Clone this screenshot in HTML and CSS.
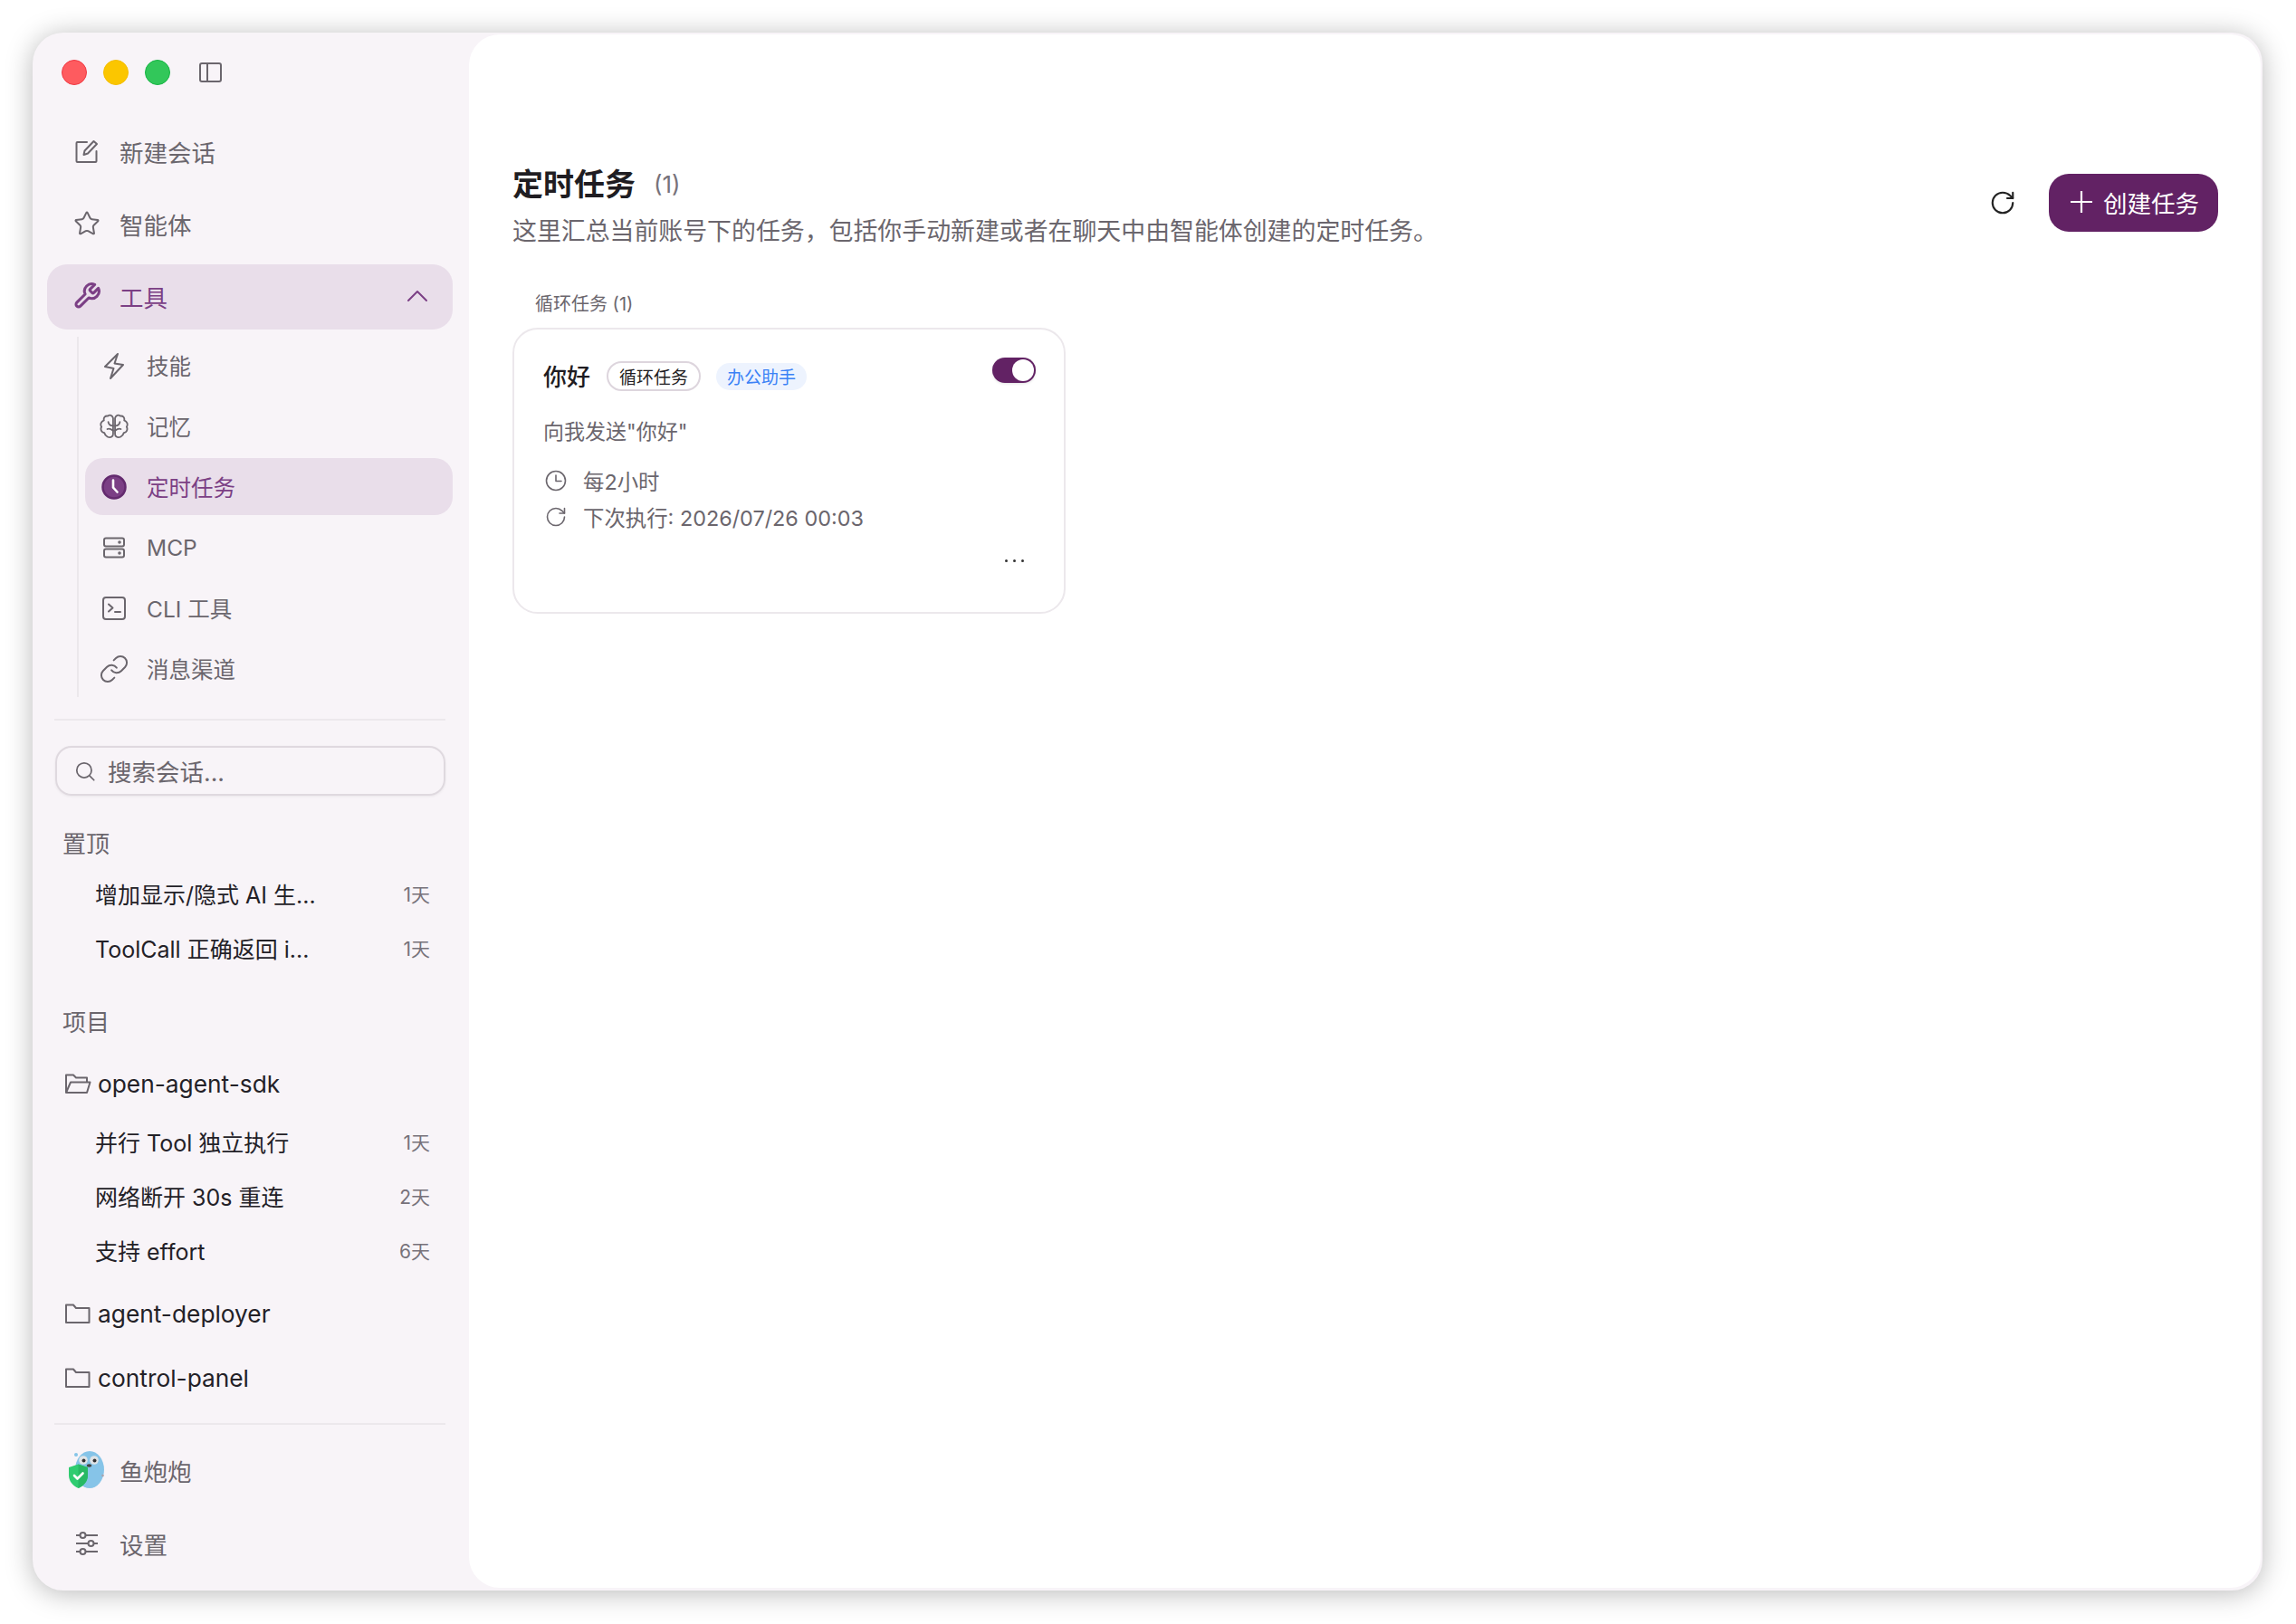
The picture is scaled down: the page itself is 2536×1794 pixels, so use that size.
FILE: index.html
```html
<!DOCTYPE html>
<html lang="zh-CN">

<head>
    <meta charset="UTF-8">
    <meta name="viewport" content="width=device-width, initial-scale=1.0">
    <title>定时任务</title>
    <link rel="stylesheet" href="styles.css">
</head>

<body>
    <div class="window">
        <aside class="sidebar">
            <div class="titlebar">
                <span class="light light-red"></span>
                <span class="light light-yellow"></span>
                <span class="light light-green"></span>
                <svg class="panel-icon" viewBox="0 0 25 22" fill="none" stroke="currentColor" stroke-width="2">
                    <rect x="1" y="1" width="23" height="20" rx="2" />
                    <path d="M9 1v20" />
                </svg>
            </div>

            <nav class="nav">
                <div class="nav-item">
                    <span class="nav-icon">
                        <svg width="26" height="26" viewBox="0 0 26 26" fill="none" stroke="currentColor" stroke-width="2" stroke-linejoin="round" stroke-linecap="round">
                            <path d="M13 3H2.5a1 1 0 0 0-1 1v20a1 1 0 0 0 1 1h20a1 1 0 0 0 1-1V13" />
                            <path d="M20.5 2l3.5 3-10 10.500-4.500 1.500 1-4.500z" />
                        </svg>
                    </span>
                    <span>新建会话</span>
                </div>
                <div class="nav-item">
                    <span class="nav-icon">
                        <svg width="30" height="30" viewBox="0 0 24 24" fill="none" stroke="currentColor" stroke-width="1.600" stroke-linejoin="round">
                            <path d="M11.525 2.295a.53.53 0 0 1 .95 0l2.31 4.679a2.123 2.123 0 0 0 1.595 1.16l5.166.756a.53.53 0 0 1 .294.904l-3.736 3.638a2.123 2.123 0 0 0-.611 1.878l.882 5.14a.53.53 0 0 1-.771.56l-4.618-2.428a2.122 2.122 0 0 0-1.973 0L6.396 21.01a.53.53 0 0 1-.77-.56l.881-5.139a2.122 2.122 0 0 0-.611-1.879L2.16 9.795a.53.53 0 0 1 .294-.906l5.165-.755a2.122 2.122 0 0 0 1.597-1.16z" />
                        </svg>
                    </span>
                    <span>智能体</span>
                </div>
                <div class="nav-item active">
                    <span class="nav-icon">
                        <svg width="32" height="32" viewBox="0 0 24 24" fill="none" stroke="currentColor" stroke-width="2.300" stroke-linejoin="round" stroke-linecap="round">
                            <path d="M14.7 6.300a1 1 0 0 0 0 1.400l1.600 1.600a1 1 0 0 0 1.400 0l3.770-3.770a6 6 0 0 1-7.940 7.940l-6.910 6.910a2.120 2.120 0 0 1-3-3l6.910-6.910a6 6 0 0 1 7.940-7.940l-3.760 3.760z" />
                        </svg>
                    </span>
                    <span>工具</span>
                    <svg class="chevron" width="24" height="14" viewBox="0 0 24 14" fill="none" stroke="currentColor" stroke-width="2" stroke-linecap="round" stroke-linejoin="round">
                        <path d="M2 12L12 2l10 10" />
                    </svg>
                </div>
            </nav>

            <div class="subnav">
                <div class="sub-item">
                    <span class="sub-icon">
                        <svg width="24" height="30" viewBox="0 0 24 30" fill="none" stroke="currentColor" stroke-width="2" stroke-linejoin="round">
                            <path d="M16 2L2 16l9.500 2L8 29l14-15-9.500-1.500z" />
                        </svg>
                    </span>
                    <span>技能</span>
                </div>
                <div class="sub-item">
                    <span class="sub-icon">
                        <svg width="32" height="28" viewBox="0 0 30 26" fill="none" stroke="currentColor" stroke-width="1.700" stroke-linecap="round" stroke-linejoin="round">
                            <g id="brain-half">
                                <path d="M14 4.500C13.500 1.800 10.500 .500 8.500 2.300 5.800 1.800 3.800 4 4.500 6.800 1.500 8 .300 11 2 13.500 .500 16 2 19.500 5 19.800 5.800 23.500 10 25.300 12.500 23.800 13.500 23.200 14 22 14 21V4.500z" />
                                <path d="M14 12.500C11.500 12.500 9.300 11 9 8.500" />
                                <path d="M8 15.800C9.500 15 11.500 15.500 14 17.500" />
                            </g>
                            <use href="#brain-half" transform="matrix(-1 0 0 1 30 0)" />
                        </svg>
                    </span>
                    <span>记忆</span>
                </div>
                <div class="sub-item active">
                    <span class="sub-icon">
                        <svg width="28" height="28" viewBox="0 0 28 28">
                            <circle cx="14" cy="14" r="12.500" fill="#7b3f85" stroke="#632a6e" stroke-width="2.500" />
                            <path d="M13 6.500v8l4.500 5" fill="none" stroke="#fff" stroke-width="2.600" stroke-linecap="round" />
                        </svg>
                    </span>
                    <span>定时任务</span>
                </div>
                <div class="sub-item">
                    <span class="sub-icon">
                        <svg width="26" height="24" viewBox="0 0 26 24" fill="none" stroke="currentColor" stroke-width="2">
                            <rect x="2" y="1.500" width="22" height="9" rx="2" />
                            <rect x="2" y="13.500" width="22" height="9" rx="2" />
                            <circle cx="19" cy="6" r=".8" />
                            <circle cx="19" cy="18" r=".8" />
                        </svg>
                    </span>
                    <span>MCP</span>
                </div>
                <div class="sub-item">
                    <span class="sub-icon">
                        <svg width="26" height="26" viewBox="0 0 26 26" fill="none" stroke="currentColor" stroke-width="2" stroke-linecap="round" stroke-linejoin="round">
                            <rect x="1" y="1" width="24" height="24" rx="3" />
                            <path d="M7 8.500l4.500 4-4.500 4" />
                            <path d="M14 17h6" />
                        </svg>
                    </span>
                    <span>CLI 工具</span>
                </div>
                <div class="sub-item">
                    <span class="sub-icon">
                        <svg width="34" height="34" viewBox="0 0 24 24" fill="none" stroke="currentColor" stroke-width="1.400" stroke-linecap="round" stroke-linejoin="round">
                            <path d="M10 13a5 5 0 0 0 7.540.54l3-3a5 5 0 0 0-7.070-7.070l-1.720 1.710" />
                            <path d="M14 11a5 5 0 0 0-7.540-.54l-3 3a5 5 0 0 0 7.070 7.070l1.710-1.710" />
                        </svg>
                    </span>
                    <span>消息渠道</span>
                </div>
            </div>

            <div class="divider divider-top"></div>

            <div class="search">
                <svg width="26" height="26" viewBox="0 0 24 24" fill="none" stroke="currentColor" stroke-width="1.600" stroke-linecap="round">
                    <circle cx="11" cy="11" r="7.500" />
                    <path d="M21 21l-4.300-4.300" />
                </svg>
                <span>搜索会话...</span>
            </div>

            <div class="group-title group-pinned">置顶</div>
            <div class="chat-row chat-first"><span>增加显示/隐式 AI 生...</span><span class="chat-age">1天</span></div>
            <div class="chat-row"><span>ToolCall 正确返回 i...</span><span class="chat-age">1天</span></div>

            <div class="group-title group-projects">项目</div>
            <div class="project project-open">
                <svg width="30" height="24" viewBox="0 0 30 24" fill="none" stroke="currentColor" stroke-width="2" stroke-linejoin="round">
                    <path d="M2 22V2.500h8l3 3h12v5" />
                    <path d="M2 22l5-11.500h21.500L25 22z" />
                </svg>
                <span>open-agent-sdk</span>
            </div>
            <div class="chat-row chat-first-project"><span>并行 Tool 独立执行</span><span class="chat-age">1天</span></div>
            <div class="chat-row"><span>网络断开 30s 重连</span><span class="chat-age">2天</span></div>
            <div class="chat-row"><span>支持 effort</span><span class="chat-age">6天</span></div>
            <div class="project project-second">
                <svg width="30" height="24" viewBox="0 0 30 24" fill="none" stroke="currentColor" stroke-width="2" stroke-linejoin="round">
                    <path d="M2 22V2.500h8l3 3.500h14.500v16z" />
                </svg>
                <span>agent-deployer</span>
            </div>
            <div class="project project-third">
                <svg width="30" height="24" viewBox="0 0 30 24" fill="none" stroke="currentColor" stroke-width="2" stroke-linejoin="round">
                    <path d="M2 22V2.500h8l3 3.500h14.500v16z" />
                </svg>
                <span>control-panel</span>
            </div>

            <div class="divider divider-bottom"></div>

            <div class="nav nav-bottom">
                <div class="nav-item">
                    <span class="nav-icon">
                        <svg width="40" height="42" viewBox="0 0 40 42">
                            <ellipse cx="23" cy="20.500" rx="16" ry="20.500" fill="#86c4e8" />
                            <circle cx="8" cy="4" r="2" fill="#86c4e8" />
                            <circle cx="37.500" cy="27" r="1.300" fill="#a9a3ad" />
                            <circle cx="16" cy="10" r="4.800" fill="#dfe3e6" />
                            <circle cx="28" cy="10" r="4.800" fill="#dfe3e6" />
                            <circle cx="16.500" cy="10.500" r="2" fill="#333" />
                            <circle cx="28.500" cy="10.500" r="2" fill="#333" />
                            <ellipse cx="22.500" cy="16" rx="2.800" ry="1.800" fill="#444" />
                            <path d="M0 18l10.500-3.500L21 18v9c0 6.500-5 11.500-10.500 14C5 38.500 0 33.500 0 27z" fill="#2fcc70" />
                            <path d="M10.500 14.500L21 18v9c0 6.500-5 11.500-10.500 14z" fill="#27b964" />
                            <path d="M6 27l3.500 3.500 6-6" fill="none" stroke="#fff" stroke-width="2.600" stroke-linecap="round" stroke-linejoin="round" />
                        </svg>
                    </span>
                    <span>鱼炮炮</span>
                </div>
                <div class="nav-item">
                    <span class="nav-icon">
                        <svg width="26" height="26" viewBox="0 0 26 26" fill="none" stroke="currentColor" stroke-width="2">
                            <path d="M1 4h4m7 0h13M1 13h13m7 0h4M1 22h4m7 0h13" />
                            <circle cx="8.500" cy="4" r="3" />
                            <circle cx="17.500" cy="13" r="3" />
                            <circle cx="8.500" cy="22" r="3" />
                        </svg>
                    </span>
                    <span>设置</span>
                </div>
            </div>
        </aside>

        <main class="main">
            <header class="header">
                <div>
                    <div class="page-title">
                        <h1>定时任务</h1>
                        <span class="page-count">(1)</span>
                    </div>
                    <p class="page-desc">这里汇总当前账号下的任务，包括你手动新建或者在聊天中由智能体创建的定时任务。</p>
                </div>
                <div class="actions">
                    <svg class="refresh" width="30" height="30" viewBox="0 0 24 24" fill="none" stroke="currentColor" stroke-width="1.700" stroke-linecap="round" stroke-linejoin="round">
                        <path d="M21 12a9 9 0 1 1-9-9c2.520 0 4.930 1 6.740 2.740L21 8" />
                        <path d="M21 3v5h-5" />
                    </svg>
                    <button class="btn-create">
                        <svg width="24" height="24" viewBox="0 0 24 24" fill="none" stroke="currentColor" stroke-width="2.200">
                            <path d="M12 0v24M0 12h24" />
                        </svg>
                        <span>创建任务</span>
                    </button>
                </div>
            </header>

            <div class="section-label">循环任务 (1)</div>

            <div class="card">
                <div class="card-top">
                    <span class="card-title">你好</span>
                    <span class="tag tag-outline">循环任务</span>
                    <span class="tag tag-blue">办公助手</span>
                    <span class="toggle"><span class="toggle-knob"></span></span>
                </div>
                <p class="card-desc">向我发送"你好"</p>
                <div class="meta meta-first">
                    <svg width="24" height="24" viewBox="0 0 24 24" fill="none" stroke="currentColor" stroke-width="1.600" stroke-linecap="round" stroke-linejoin="round">
                        <circle cx="12" cy="12" r="10.500" />
                        <path d="M12 6v6.500h6" />
                    </svg>
                    <span>每2小时</span>
                </div>
                <div class="meta">
                    <svg width="24" height="24" viewBox="0 0 24 24" fill="none" stroke="currentColor" stroke-width="1.600" stroke-linecap="round" stroke-linejoin="round">
                        <path d="M21.500 12a9.500 9.500 0 1 1-9.500-9.500c2.600 0 5 1 6.900 2.800L21.500 8" />
                        <path d="M21.500 2.500V8H16" />
                    </svg>
                    <span>下次执行: 2026/07/26 00:03</span>
                </div>
                <div class="card-more"><i></i><i></i><i></i></div>
            </div>
        </main>
    </div>
</body>

</html>
```

FILE: styles.css
```css
* {
    box-sizing: border-box;
}

body {
    margin: 0;
    height: 1794px;
    padding: 36px 0 0 36px;
    background: #fff;
    font-family: Inter, "Noto Sans CJK SC", sans-serif;
    color: #1f1d22;
    overflow: hidden;
}

.window {
    display: flex;
    width: 2463px;
    height: 1721px;
    background: #f8f4f8;
    border-radius: 34px;
    box-shadow: 0 3px 30px rgba(0, 0, 0, 0.28);
}

.sidebar {
    width: 482px;
    flex-shrink: 0;
    padding: 30px 18px 0 16px;
    color: #6b666d;
    font-size: 26px;
}

.titlebar {
    display: flex;
    align-items: center;
    height: 28px;
    padding-left: 16px;
    gap: 18px;
}

.light {
    width: 28px;
    height: 28px;
    border-radius: 50%;
    border: 1px solid transparent;
}

.light-red {
    background: #fe5b5f;
    border-color: #f03a44;
}

.light-yellow {
    background: #fbc600;
    border-color: #f5be00;
}

.light-green {
    background: #32c75a;
    border-color: #17b544;
}

.panel-icon {
    width: 25px;
    height: 22px;
    margin-left: 14px;
}

.nav {
    display: flex;
    flex-direction: column;
    gap: 8px;
    margin-top: 37px;
    font-size: 26.500px;
}

.nav-item {
    display: flex;
    align-items: center;
    height: 72px;
    padding-left: 24px;
    border-radius: 22px;
}

.nav-item.active {
    margin-top: 1px;
    padding-bottom: 2px;
    background: #e9deea;
    color: #7b3f85;
}

.nav-icon {
    display: flex;
    justify-content: center;
    align-items: center;
    width: 40px;
    margin-right: 16px;
}

.chevron {
    margin-left: auto;
    margin-right: 27px;
}

.subnav {
    display: flex;
    flex-direction: column;
    gap: 4px;
    margin: 8px 0 0 33px;
    padding-left: 7px;
    border-left: 2px solid #ece8ec;
    font-size: 24.500px;
}

.sub-item {
    display: flex;
    align-items: center;
    height: 63px;
    padding-left: 12px;
    border-radius: 20px;
}

.sub-item.active {
    background: #e9deea;
    color: #7b3f85;
}

.sub-icon {
    display: flex;
    justify-content: center;
    align-items: center;
    width: 40px;
    margin-right: 16px;
}

.divider {
    height: 2px;
    margin: 0 8px;
    background: #ece8ec;
}

.divider-top {
    margin-top: 24px;
}

.divider-bottom {
    margin-top: 20px;
}

.search {
    display: flex;
    align-items: center;
    gap: 12px;
    height: 55px;
    margin: 28px 8px 0 9px;
    padding-left: 18px;
    border: 2px solid #dfd9df;
    border-radius: 18px;
    box-shadow: 0 1px 3px rgba(0, 0, 0, 0.06);
    font-size: 26.500px;
}

.group-title {
    height: 40px;
    line-height: 40px;
    padding-left: 17px;
}

.group-pinned {
    margin-top: 34px;
}

.group-projects {
    margin-top: 33px;
}

.chat-row {
    display: flex;
    justify-content: space-between;
    align-items: center;
    height: 60px;
    padding: 0 25px 0 53px;
    color: #232127;
    font-size: 25px;
}

.chat-first {
    margin-top: 4px;
}

.chat-first-project {
    margin-top: 4px;
}

.chat-age {
    color: #77727a;
    font-size: 21px;
}

.project {
    display: flex;
    align-items: center;
    gap: 7px;
    height: 60px;
    padding-left: 19px;
    color: #232127;
    font-size: 26.300px;
}

.project svg {
    color: #6b666d;
}

.project-open {
    margin-top: 17px;
}

.project-second {
    margin-top: 10px;
}

.project-third {
    margin-top: 11px;
}

.nav-bottom {
    gap: 9px;
    margin-top: 14px;
}

.main {
    flex: 1;
    margin: 2px 2px 3px 0;
    padding: 141px 47px 0 48px;
    background: #fff;
    border-radius: 34px;
}

.header {
    display: flex;
    justify-content: space-between;
    align-items: flex-start;
}

.page-title {
    display: flex;
    align-items: center;
    gap: 20px;
    height: 48px;
}

h1 {
    margin: -4px 0 0;
    font-size: 34px;
    font-weight: 600;
}

.page-count {
    color: #77727a;
    font-size: 26px;
}

.page-desc {
    margin: 9px 0 0;
    color: #6b666d;
    font-size: 26.900px;
    line-height: 38px;
}

.actions {
    display: flex;
    align-items: center;
    gap: 36px;
    margin-top: 13px;
}

.refresh {
    color: #222;
}

.btn-create {
    display: flex;
    align-items: center;
    gap: 12px;
    width: 187px;
    height: 64px;
    padding: 0 0 2px 24px;
    border: none;
    border-radius: 22px;
    background: #622264;
    color: #fff;
    font-family: inherit;
    font-size: 26.500px;
}

.section-label {
    margin-top: 48px;
    padding-left: 25px;
    color: #6b666d;
    font-size: 20px;
    line-height: 28px;
}

.card {
    width: 611px;
    height: 316px;
    margin-top: 12px;
    padding: 34px 31px 0 32px;
    border: 2px solid #ece8ec;
    border-radius: 28px;
    background: #fff;
}

.card-top {
    display: flex;
    align-items: center;
    height: 36px;
}

.card-title {
    margin: -3px 18px 0 0;
    font-size: 26px;
    font-weight: 500;
}

.tag {
    display: flex;
    align-items: center;
    border-radius: 17px;
    font-size: 19px;
    white-space: nowrap;
}

.tag-outline {
    height: 33px;
    padding: 0 12px;
    margin: -1px 17px 0 0;
    border: 2px solid #ddd5dd;
}

.tag-blue {
    height: 30px;
    padding: 0 12px;
    margin-top: -1px;
    background: #edf3fe;
    color: #3b82f6;
}

.toggle {
    display: flex;
    justify-content: flex-end;
    align-items: center;
    width: 48px;
    height: 28px;
    margin: -14px 0 0 auto;
    padding-right: 2px;
    border-radius: 14px;
    background: #622264;
    box-shadow: 0 1px 3px rgba(0, 0, 0, 0.12);
}

.toggle-knob {
    width: 24px;
    height: 24px;
    border-radius: 50%;
    background: #fff;
}

.card-desc {
    margin: 27px 0 0;
    color: #6b666d;
    font-size: 23px;
    line-height: 32px;
}

.meta {
    display: flex;
    align-items: center;
    gap: 18px;
    height: 32px;
    margin-top: 8px;
    color: #6b666d;
    font-size: 23.400px;
}

.meta svg {
    margin-left: 2px;
}

.meta-first {
    margin-top: 22px;
}

.card-more {
    display: flex;
    justify-content: flex-end;
    gap: 6px;
    margin: 31px 13px 0 0;
}

.card-more i {
    width: 3px;
    height: 3px;
    border-radius: 50%;
    background: #333;
}
```
